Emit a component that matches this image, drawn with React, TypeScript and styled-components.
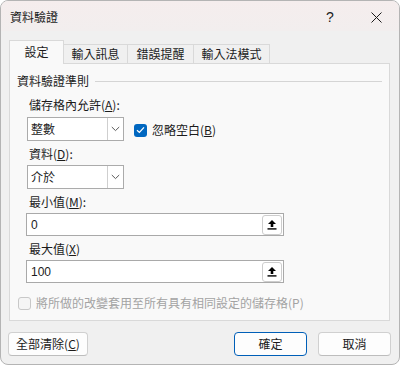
import React from 'react'
import styled, { createGlobalStyle } from 'styled-components'

const GlobalStyle = createGlobalStyle`
  html, body {
    margin: 0;
    padding: 0;
    background: #ffffff;
  }
  body {
    font-family: "Noto Sans CJK TC", "Noto Sans", "Liberation Sans", sans-serif;
    font-size: 12px;
    color: #1b1b1b;
  }
`

const Window = styled.div`
  width: 400px;
  height: 365px;
  box-sizing: border-box;
  border: 1px solid #b4b4b4;
  border-radius: 8px;
  background: #f0f0f0;
  overflow: hidden;
  display: flex;
  flex-direction: column;
`

const TitleBar = styled.div`
  height: 30px;
  flex-shrink: 0;
  display: flex;
  align-items: center;
  background: linear-gradient(180deg, #f5eded 0%, #f2eeee 100%);
`

const Title = styled.div`
  flex-grow: 1;
  padding-left: 9px;
  line-height: 16px;
  padding-top: 2px;
`

const CaptionButton = styled.div`
  width: 46px;
  height: 30px;
  display: flex;
  align-items: center;
  justify-content: center;
  color: #1b1b1b;
  font-family: "Liberation Sans", sans-serif;
  font-size: 14px;
  padding-top: 2px;
  box-sizing: border-box;
`

const TabRow = styled.div`
  display: flex;
  align-items: flex-end;
  margin: 9px 0 0 8px;
  height: 24px;
  position: relative;
  z-index: 1;
`

const Tab = styled.div<{ $active?: boolean; $width: number }>`
  width: ${({ $width }) => $width}px;
  height: ${({ $active }) => ($active ? 24 : 20)}px;
  box-sizing: border-box;
  display: flex;
  align-items: center;
  justify-content: center;
  border: 1px solid #d9d9d9;
  border-bottom: ${({ $active }) => ($active ? 'none' : '1px solid #d9d9d9')};
  border-left: ${({ $active }) => ($active ? '1px solid #d9d9d9' : 'none')};
  background: ${({ $active }) => ($active ? '#f9f9f9' : '#f0f0f0')};
  line-height: 16px;
  padding-bottom: ${({ $active }) => ($active ? 2 : 0)}px;
`

const Panel = styled.div`
  margin: -1px 9px 0 8px;
  height: 258px;
  box-sizing: border-box;
  border: 1px solid #d9d9d9;
  background: #f9f9f9;
  padding: 9px 7px 0 7px;
`

const GroupHeader = styled.div`
  display: flex;
  align-items: center;
  gap: 6px;
  line-height: 16px;
`

const GroupLine = styled.div`
  flex-grow: 1;
  height: 1px;
  background: #d5d5d5;
  margin-top: 1px;
`

const GroupBody = styled.div`
  padding-left: 10px;
  padding-top: 8px;
  display: flex;
  flex-direction: column;
`

const Label = styled.div<{ $top?: number; $gap?: number }>`
  line-height: 16px;
  margin-top: ${({ $top }) => $top ?? 0}px;
  margin-bottom: ${({ $gap }) => $gap ?? 3}px;
  padding-left: 2px;
`

const Key = styled.span`
  text-decoration: underline;
  text-underline-offset: 1px;
`

const Row = styled.div`
  display: flex;
  align-items: center;
`

const Select = styled.div`
  width: 97px;
  height: 24px;
  box-sizing: border-box;
  border: 1px solid #ababab;
  background: #ffffff;
  display: flex;
  align-items: stretch;
`

const SelectText = styled.div`
  flex-grow: 1;
  padding-left: 3px;
  display: flex;
  align-items: center;
  line-height: 16px;
`

const SelectArrow = styled.div`
  width: 15px;
  border-left: 1px solid #cfcfcf;
  display: flex;
  align-items: center;
  justify-content: center;
`

const CheckBox = styled.div<{ $checked?: boolean }>`
  width: 13px;
  height: 13px;
  box-sizing: border-box;
  border-radius: 3px;
  background: ${({ $checked }) => ($checked ? '#0067c0' : '#f5f5f5')};
  border: ${({ $checked }) => ($checked ? 'none' : '1px solid #c8c8c8')};
  display: flex;
  align-items: center;
  justify-content: center;
  flex-shrink: 0;
`

const CheckLabel = styled.div<{ $disabled?: boolean }>`
  margin-left: 5px;
  line-height: 16px;
  color: ${({ $disabled }) => ($disabled ? '#a3a3a3' : '#1b1b1b')};
`

const InlineCheck = styled(Row)`
  margin-left: 10px;
  margin-top: 2px;
`

const Input = styled.div`
  width: 258px;
  height: 23px;
  box-sizing: border-box;
  border: 1px solid #a9a9a9;
  background: #ffffff;
  display: flex;
  align-items: center;
  padding: 0 1px 0 4px;
  margin-left: -1px;
`

const InputValue = styled.div`
  flex-grow: 1;
  font-family: "Liberation Sans", sans-serif;
  font-size: 12px;
`

const RefButton = styled.div`
  width: 20px;
  height: 20px;
  box-sizing: border-box;
  border: 1px solid #cdcdcd;
  border-radius: 3px;
  background: #ffffff;
  display: flex;
  align-items: center;
  justify-content: center;
`

const ApplyRow = styled(Row)`
  margin-top: 12px;
  margin-left: 1px;
`

const Footer = styled.div`
  display: flex;
  margin: 11px 8px 0 7px;
  gap: 11px;
`

const Button = styled.div<{ $primary?: boolean; $width: number }>`
  width: ${({ $width }) => $width}px;
  height: 24px;
  box-sizing: border-box;
  border: 1px solid ${({ $primary }) => ($primary ? '#005fb8' : '#d0d0d0')};
  border-bottom-color: ${({ $primary }) => ($primary ? '#005fb8' : '#bdbdbd')};
  border-radius: 4px;
  background: #fdfdfd;
  display: flex;
  align-items: center;
  justify-content: center;
  line-height: 16px;
`

const Spacer = styled.div`
  flex-grow: 1;
`

const Chevron = () => (
  <svg width="9" height="6" viewBox="0 0 9 6">
    <path d="M0.8 1 L4.5 4.6 L8.2 1" fill="none" stroke="#5a5a5a" strokeWidth="1" />
  </svg>
)

const Tick = () => (
  <svg width="9" height="8" viewBox="0 0 9 8">
    <path d="M1 4.2 L3.4 6.4 L8 1.4" fill="none" stroke="#ffffff" strokeWidth="1.3" />
  </svg>
)

const UploadIcon = () => (
  <svg width="10" height="11" viewBox="0 0 10 11">
    <path d="M5 1 L9 5 L6.3 5 L6.3 8 L3.7 8 L3.7 5 L1 5 Z" fill="#000000" />
    <rect x="0.5" y="9.2" width="9" height="1.4" fill="#000000" />
  </svg>
)

const tabs = [
  { label: '設定', width: 55, active: true },
  { label: '輸入訊息', width: 64 },
  { label: '錯誤提醒', width: 66 },
  { label: '輸入法模式', width: 76 },
]

export default function App() {
  return (
    <>
      <GlobalStyle />
      <Window>
        <TitleBar>
          <Title>資料驗證</Title>
          <CaptionButton>?</CaptionButton>
          <CaptionButton>
            <svg width="11" height="11" viewBox="0 0 11 11">
              <path d="M0.5 0.5 L10.5 10.5 M10.5 0.5 L0.5 10.5" stroke="#1b1b1b" strokeWidth="1" />
            </svg>
          </CaptionButton>
        </TitleBar>

        <TabRow>
          {tabs.map((t) => (
            <Tab key={t.label} $active={t.active} $width={t.width}>
              {t.label}
            </Tab>
          ))}
        </TabRow>

        <Panel>
          <GroupHeader>
            資料驗證準則
            <GroupLine />
          </GroupHeader>
          <GroupBody>
            <Label $gap={4}>
              儲存格內允許(<Key>A</Key>):
            </Label>
            <Row>
              <Select>
                <SelectText>整數</SelectText>
                <SelectArrow>
                  <Chevron />
                </SelectArrow>
              </Select>
              <InlineCheck>
                <CheckBox $checked>
                  <Tick />
                </CheckBox>
                <CheckLabel>
                  忽略空白(<Key>B</Key>)
                </CheckLabel>
              </InlineCheck>
            </Row>

            <Label $top={5}>
              資料(<Key>D</Key>):
            </Label>
            <Row>
              <Select>
                <SelectText>介於</SelectText>
                <SelectArrow>
                  <Chevron />
                </SelectArrow>
              </Select>
            </Row>

            <Label $top={5}>
              最小值(<Key>M</Key>):
            </Label>
            <Input>
              <InputValue>0</InputValue>
              <RefButton>
                <UploadIcon />
              </RefButton>
            </Input>

            <Label $top={5}>
              最大值(<Key>X</Key>)
            </Label>
            <Input>
              <InputValue>100</InputValue>
              <RefButton>
                <UploadIcon />
              </RefButton>
            </Input>
          </GroupBody>

          <ApplyRow>
            <CheckBox />
            <CheckLabel $disabled>將所做的改變套用至所有具有相同設定的儲存格(P)</CheckLabel>
          </ApplyRow>
        </Panel>

        <Footer>
          <Button $width={80}>
            全部清除(<Key>C</Key>)
          </Button>
          <Spacer />
          <Button $primary $width={73}>
            確定
          </Button>
          <Button $width={73}>取消</Button>
        </Footer>
      </Window>
    </>
  )
}
